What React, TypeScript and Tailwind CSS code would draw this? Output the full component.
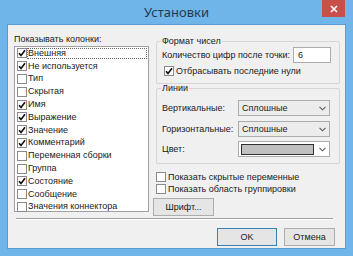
import { FC } from 'react'

const font = { fontFamily: '"Liberation Sans", Arial, sans-serif' }

const Check: FC<{ on?: boolean }> = ({ on }) => (
	<span className="flex items-center justify-center w-[10px] h-[10px] bg-white border border-[#8a8a8a] shrink-0">
		{on && (
			<svg width="8" height="8" viewBox="0 0 8 8">
				<path d="M1 4.2 L3 6.4 L7 1.2" fill="none" stroke="#111" strokeWidth="1.6" />
			</svg>
		)}
	</span>
)

const Chevron: FC = () => (
	<svg width="7" height="5" viewBox="0 0 7 5" className="shrink-0">
		<path d="M0.5 0.8 L3.5 3.8 L6.5 0.8" fill="none" stroke="#5a5a5a" strokeWidth="1.1" />
	</svg>
)

const columns: [string, boolean][] = [
	['Внешняя', true],
	['Не используется', true],
	['Тип', false],
	['Скрытая', false],
	['Имя', true],
	['Выражение', true],
	['Значение', true],
	['Комментарий', true],
	['Переменная сборки', false],
	['Группа', false],
	['Состояние', true],
	['Сообщение', false],
	['Значения коннектора', false],
]

const App: FC = () => {
	return (
		<div className="w-[353px] h-[256px] bg-[#6fb5e9] flex flex-col text-[9px] text-[#1a1a1a] leading-none whitespace-nowrap" style={font}>
			<div className="relative h-[24px] flex items-center justify-center shrink-0">
				<span className="text-[13px] text-[#1f3a56]" style={{ fontFamily: '"Noto Sans", sans-serif' }}>Установки</span>
				<div className="absolute right-[8px] top-0 w-[23px] h-[17px] bg-[#c9504a] flex items-center justify-center">
					<svg width="8" height="8" viewBox="0 0 8 8">
						<path d="M1 1 L7 7 M7 1 L1 7" stroke="#fff" strokeWidth="1.6" />
					</svg>
				</div>
			</div>
			<div className="mx-[7px] mb-[7px] flex-1 bg-[#f0f0f0] border border-[#5b9bd5] flex flex-col">
				<div className="flex pt-[7px]">
					<div className="ml-[6px] w-[135px] flex flex-col">
						<span className="h-[14px] flex items-center">Показывать колонки:</span>
						<div className="h-[166px] bg-white border border-[#a0a0a0] pt-[0px] flex flex-col">
							{columns.map(([name, on], i) => (
								<div key={name} className="h-[12.8px] flex items-center pl-[2px] shrink-0">
									<Check on={on} />
									<span className={i === 0 ? 'ml-[1px] pr-[80px] outline outline-1 outline-dotted outline-[#666]' : 'ml-[1px]'}>{name}</span>
								</div>
							))}
						</div>
					</div>
					<div className="ml-[7px] w-[184px] flex flex-col">
						<div className="relative mt-[9px] h-[43px] border border-[#d5d5d5] rounded-[2px] flex flex-col pl-[5px]">
							<span className="absolute -top-[5px] left-[4px] px-[1px] bg-[#f0f0f0]">Формат чисел</span>
							<div className="flex items-center mt-[5px]">
								<span>Количество цифр после точки:</span>
								<div className="ml-auto mr-[8px] w-[38px] h-[16px] bg-white border border-[#ababab] flex items-center pl-[4px]">6</div>
							</div>
							<div className="flex items-center mt-[3px] ml-[2px]">
								<Check on />
								<span className="ml-[2px]">Отбрасывать последние нули</span>
							</div>
						</div>
						<div className="relative mt-[4px] h-[76px] border border-[#d5d5d5] rounded-[2px] flex flex-col pl-[5px]">
							<span className="absolute -top-[5px] left-[4px] px-[1px] bg-[#f0f0f0]">Линии</span>
							<div className="flex items-center mt-[11px]">
								<span className="w-[76px]">Вертикальные:</span>
								<div className="w-[92px] h-[16px] bg-[#ececec] border border-[#acacac] flex items-center px-[3px]">
									<span>Сплошные</span>
									<span className="ml-auto"><Chevron /></span>
								</div>
							</div>
							<div className="flex items-center mt-[5px]">
								<span className="w-[76px]">Горизонтальные:</span>
								<div className="w-[92px] h-[16px] bg-[#ececec] border border-[#acacac] flex items-center px-[3px]">
									<span>Сплошные</span>
									<span className="ml-auto"><Chevron /></span>
								</div>
							</div>
							<div className="flex items-center mt-[4px]">
								<span className="w-[76px]">Цвет:</span>
								<div className="w-[92px] h-[16px] bg-white border border-[#acacac] flex items-center pl-[2px] pr-[3px]">
									<span className="w-[73px] h-[11px] bg-[#c0c0c0] border border-[#303030]" />
									<span className="ml-auto"><Chevron /></span>
								</div>
							</div>
						</div>
						<div className="flex items-center mt-[8px]">
							<Check />
							<span className="ml-[2px]">Показать скрытые переменные</span>
						</div>
						<div className="flex items-center mt-[2px]">
							<Check />
							<span className="ml-[2px]">Показать область группировки</span>
						</div>
						<div className="-ml-[3px] mt-[4px] w-[61px] h-[18px] bg-[#e5e5e5] border border-[#adadad] flex items-center justify-center">
							Шрифт...
						</div>
					</div>
				</div>
				<div className="mx-[8px] mt-[2px] mr-[12px] border-t border-[#a0a0a0] border-b border-b-white" />
				<div className="flex justify-end gap-[7px] mr-[10px] mt-[8px]">
					<div className="w-[60px] h-[18px] bg-[#e5e5e5] border border-[#3c7fb1] flex items-center justify-center">OK</div>
					<div className="w-[51px] h-[18px] bg-[#e5e5e5] border border-[#adadad] flex items-center justify-center">Отмена</div>
				</div>
			</div>
		</div>
	)
}

export default App
